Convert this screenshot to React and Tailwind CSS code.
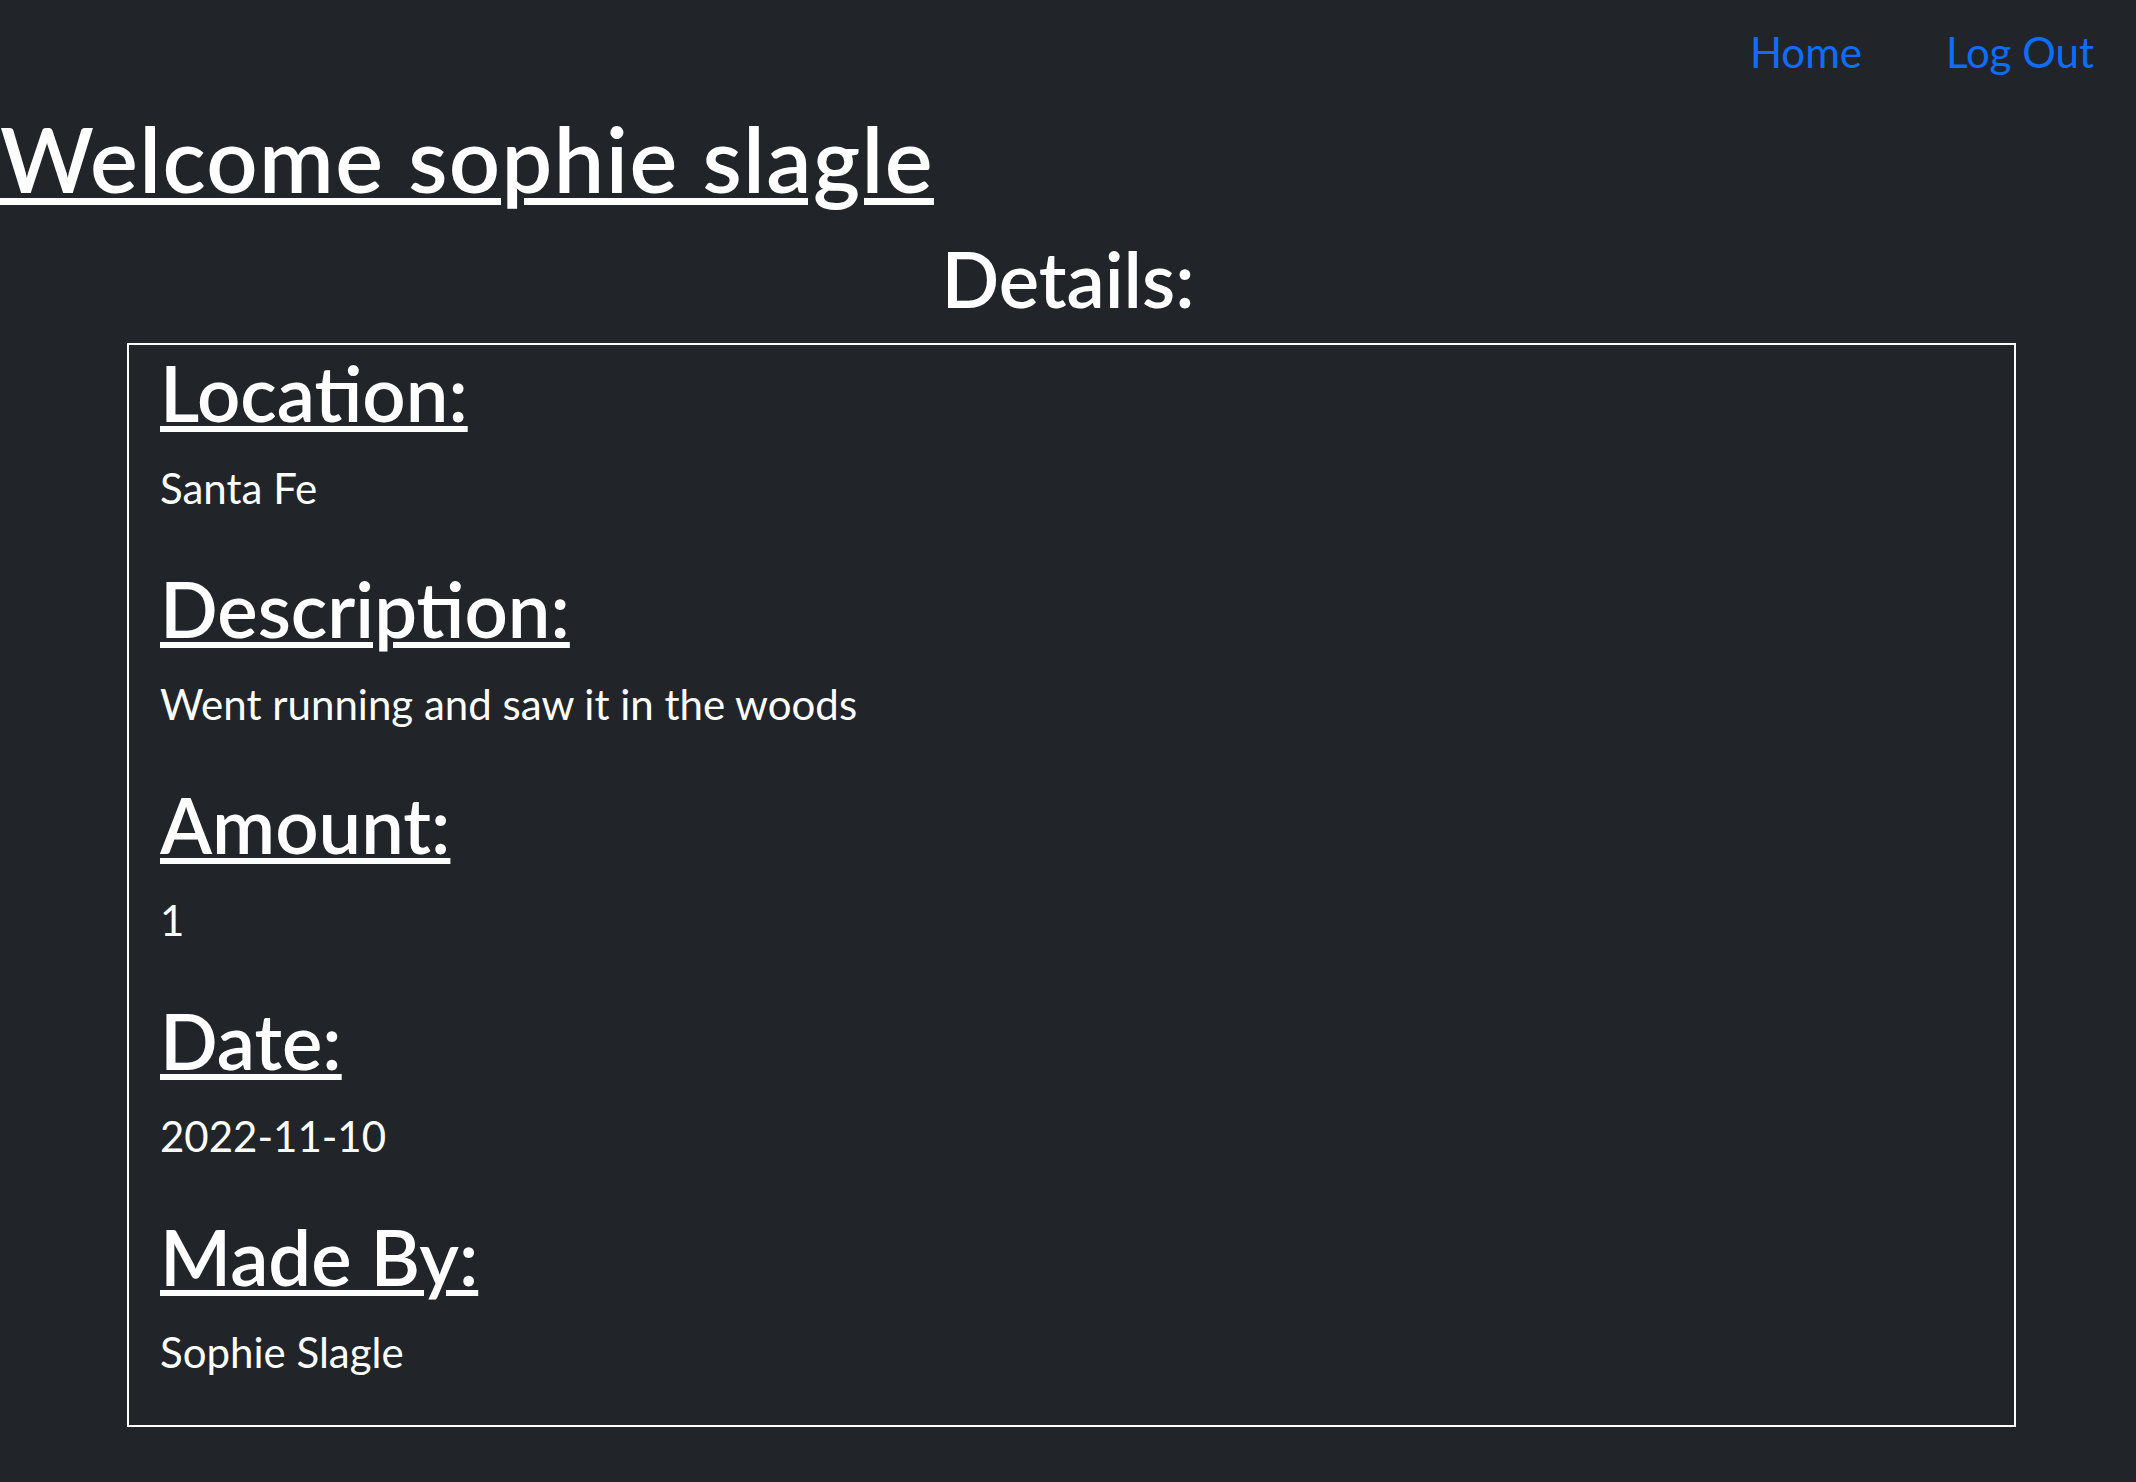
const details = [
  { label: 'Location:', value: 'Santa Fe' },
  { label: 'Description:', value: 'Went running and saw it in the woods' },
  { label: 'Amount:', value: '1' },
  { label: 'Date:', value: '2022-11-10' },
  { label: 'Made By:', value: 'Sophie Slagle' },
];

function Navbar() {
  return (
    <nav className="flex justify-end pt-[21px] pb-[18px]">
      <a href="#" className="px-[42px] text-[42px] leading-[63px] text-[#0d6efd]">
        Home
      </a>
      <a href="#" className="px-[42px] text-[42px] leading-[63px] text-[#0d6efd]">
        Log Out
      </a>
    </nav>
  );
}

export default function App() {
  return (
    <div className="min-h-screen bg-[#212529] text-white font-['Lato','Liberation_Sans',sans-serif]">
      <Navbar />

      <h1 className="pt-[2px] mb-[19px] text-[90px] leading-[108px] font-semibold tracking-[1.4px] underline decoration-[7px] underline-offset-[5px]">
        Welcome sophie slagle
      </h1>

      <h2 className="pt-[2px] mb-[19px] text-center text-[76px] leading-[91px] font-semibold">Details:</h2>

      <div className="ml-[127px] w-[1889px] border-2 border-white pl-[31px] pr-[42px]">
        {details.map((d) => (
          <div key={d.label}>
            <h2 className="pt-[2px] mb-[19px] text-[76px] leading-[91px] font-semibold underline decoration-[6px] underline-offset-[4px]">
              {d.label}
            </h2>
            <p className="mb-[41px] text-[42px] leading-[63px]">{d.value}</p>
          </div>
        ))}
      </div>
    </div>
  );
}
